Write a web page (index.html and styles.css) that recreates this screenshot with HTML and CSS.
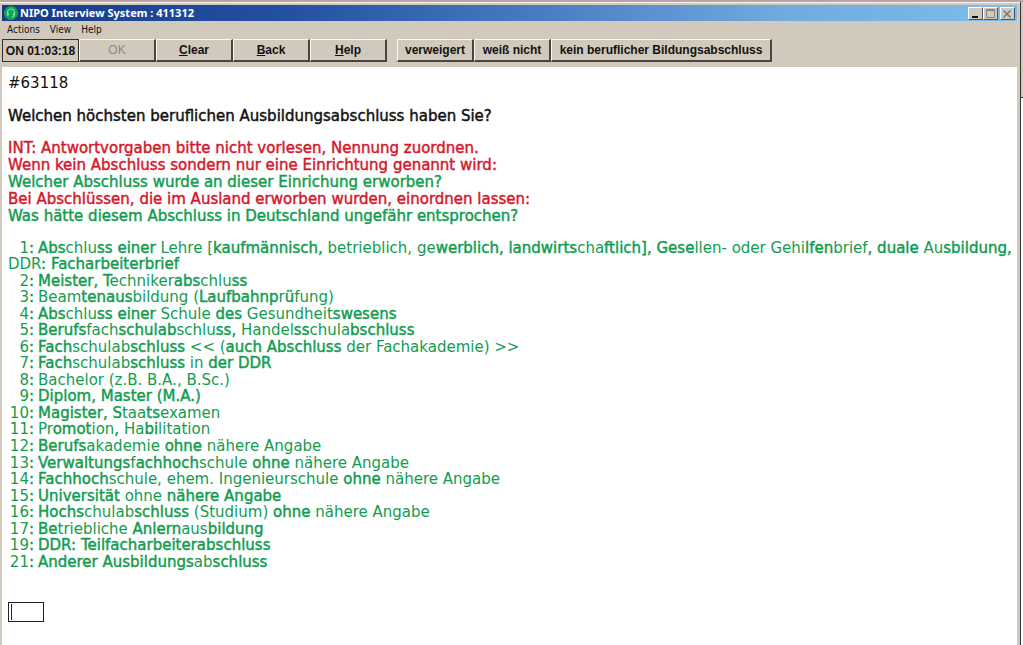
FILE: index.html
```html
<!DOCTYPE html>
<html lang="de">
<head>
<meta charset="utf-8">
<title>NIPO Interview System : 411312</title>
<link rel="stylesheet" href="styles.css">
</head>
<body>
<div class="desktop">
<div class="window">
  <header class="titlebar">
    <svg class="app-icon" viewBox="0 0 14 14" aria-hidden="true">
      <circle cx="7" cy="7" r="7" fill="#12a555"/>
      <path d="M3.5 8V6.5a3.5 3.5 0 0 1 7 0V8M10.3 9.5 8 11.3" fill="none" stroke="#7fe0a4" stroke-width="1.1"/>
      <rect x="3" y="6.8" width="1.8" height="3" rx=".8" fill="#7fe0a4"/>
      <rect x="9.2" y="6.8" width="1.8" height="3" rx=".8" fill="#7fe0a4"/>
    </svg>
    <h1 class="title">NIPO Interview System : 411312</h1>
    <div class="controls">
      <button class="control" aria-label="Minimize"><svg viewBox="0 0 12 10"><path d="M3 8h6" stroke="#111" stroke-width="2"/></svg></button>
      <button class="control" aria-label="Maximize"><svg viewBox="0 0 12 10"><path d="M2.500 .5h8v8h-8zM2.500 1.500h8" fill="none" stroke="#8a857b"/></svg></button>
      <button class="control control-close" aria-label="Close"><svg viewBox="0 0 12 10"><path d="M2.500 1.500l7 7M9.500 1.500l-7 7" stroke="#77726b" stroke-width="1.4"/></svg></button>
    </div>
  </header>
  <nav class="menu">
    <button class="menu-item">Actions</button>
    <button class="menu-item">View</button>
    <button class="menu-item">Help</button>
  </nav>
  <div class="toolbar">
    <output class="status">ON 01:03:18</output>
    <button class="tool" disabled>OK</button>
    <button class="tool"><u>C</u>lear</button>
    <button class="tool"><u>B</u>ack</button>
    <button class="tool"><u>H</u>elp</button>
    <div class="special">
      <button class="tool">verweigert</button>
      <button class="tool">weiß nicht</button>
      <button class="tool tool-wide">kein beruflicher Bildungsabschluss</button>
    </div>
  </div>
  <main class="page">
    <p class="line">#63118</p>
    <p class="line question"><label for="answer">Welchen höchsten beruflichen Ausbildungsabschluss haben Sie?</label></p>
    <div class="notes">
      <p class="note strong">INT: Antwortvorgaben bitte nicht vorlesen, Nennung zuordnen.</p>
      <p class="note strong">Wenn kein Abschluss sondern nur eine Einrichtung genannt wird:</p>
      <p class="note read strong">Welcher Abschluss wurde an dieser Einrichung erworben?</p>
      <p class="note strong">Bei Abschlüssen, die im Ausland erworben wurden, einordnen lassen:</p>
      <p class="note read strong">Was hätte diesem Abschluss in Deutschland ungefähr entsprochen?</p>
    </div>
    <ul class="answers">
      <li><span class="code">1<b>:</b></span><b>Abs</b>chlu<b>ss einer</b> Lehre [<b>kaufmännisch,</b> betrieblich, ge<b>werblich, landwirts</b>cha<b>ftlich], Gese</b>llen- oder Gehi<b>lfen</b>brief<b>, duale</b> Au<b>sbildung,</b> DDR<b>: Facharbeiterbrief</b></li>
      <li><span class="code">2<b>:</b></span><b>Meister,</b> <b>T</b>echniker<b>abs</b>chlu<b>ss</b></li>
      <li><span class="code">3<b>:</b></span>Beam<b>tenaus</b>bildung (<b>Laufbahnp</b>r<b>ü</b>fung)</li>
      <li><span class="code">4<b>:</b></span><b>Abs</b>chlu<b>ss einer</b> Schule <b>des</b> Gesundheit<b>swesens</b></li>
      <li><span class="code">5<b>:</b></span><b>Berufs</b>fach<b>schulab</b>schlu<b>ss,</b> Handel<b>ss</b>chula<b>bschluss</b></li>
      <li><span class="code">6<b>:</b></span><b>Fach</b>schulab<b>schluss</b> &lt;&lt; (<b>auch Abschluss</b> der Fachakademie) &gt;&gt;</li>
      <li><span class="code">7<b>:</b></span><b>Fach</b>schulab<b>schluss</b> in <b>der DDR</b></li>
      <li><span class="code">8<b>:</b></span>Bachelor (z.B. B.A., B.Sc.)</li>
      <li><span class="code">9<b>:</b></span><b>Diplom, Master (M.A.)</b></li>
      <li><span class="code">10<b>:</b></span><b>Magister, S</b>taa<b>ts</b>examen</li>
      <li><span class="code">11<b>:</b></span>Pr<b>omot</b>ion<b>,</b> Ha<b>bi</b>litation</li>
      <li><span class="code">12<b>:</b></span><b>Berufs</b>akademie <b>ohne</b> nähere Angabe</li>
      <li><span class="code">13<b>:</b></span><b>Verwaltungs</b>f<b>achhoch</b>schule <b>ohne</b> nähere Angabe</li>
      <li><span class="code">14<b>:</b></span><b>Fachhoch</b>schule, ehem. Ingenieurschule <b>ohne</b> nähere Angabe</li>
      <li><span class="code">15<b>:</b></span><b>Universität</b> ohne <b>nähere Angabe</b></li>
      <li><span class="code">16<b>:</b></span><b>Hochs</b>chulab<b>schluss</b> (Studium) <b>ohne</b> nähere Angabe</li>
      <li><span class="code">17<b>:</b></span><b>Be</b>triebliche <b>Anlern</b>aus<b>bildung</b></li>
      <li><span class="code">19<b>:</b></span><b>DDR:</b> <b>Teilfacharbeiterabschluss</b></li>
      <li><span class="code">21<b>:</b></span><b>Anderer Ausbildungs</b>ab<b>schluss</b></li>
    </ul>
    <input class="answer" id="answer" type="text">
  </main>
</div>
<aside class="behind"></aside>
</div>
</body>
</html>
```

FILE: styles.css
```css
* { box-sizing: border-box; }

body {
  margin: 0;
  background: #d1c9bc;
  color: #111;
  font: 15px/16px "DejaVu Sans", sans-serif;
}

h1, p, ul { margin: 0; padding: 0; }
button { font: inherit; color: inherit; }

.desktop {
  display: flex;
  min-height: 100vh;
  border-top: 2px solid #b9a5a8;
}

.window {
  flex: 1;
  display: flex;
  flex-direction: column;
  padding: 2px 3px 0 2px;
  border-top: 1px solid #f8f5ee;
  background: #d1c9bc;
}

.behind {
  width: 3px;
  border-left: 1px solid #333;
  background: linear-gradient(#d1c9bc 95px, #333 95px, #333 96px, #fff 96px);
}

.titlebar {
  display: flex;
  align-items: center;
  height: 16px;
  padding: 0 2px;
  background: linear-gradient(90deg, #153b88, #2450a0 28%, #4576bd 50%, #70abdf 77%, #7dbdec);
}

.app-icon { width: 14px; height: 14px; }

.title {
  flex: 1;
  padding-left: 2px;
  color: #fff;
  font: bold 11px/16px "Noto Sans", sans-serif;
}

.controls { display: flex; }

.control {
  display: flex;
  width: 15px;
  height: 13px;
  padding: 1px 0;
  border: 1px solid;
  border-color: #fff #47566b #47566b #fff;
  background: #d1c9bc;
}

.control svg { width: 12px; height: 10px; }
.control-close { margin-left: 2px; }

.menu {
  display: flex;
  gap: 10px;
  height: 18px;
  padding: 0 5px;
}

.menu-item {
  padding: 0;
  border: 0;
  background: none;
  font: 10px/18px "DejaVu Sans Condensed", "DejaVu Sans", sans-serif;
}

.toolbar {
  display: flex;
  height: 28px;
  padding-bottom: 5px;
  font: bold 12px/16px "Liberation Sans", sans-serif;
}

.status {
  width: 77px;
  padding: 2px 0;
  border: 1px solid #35312d;
  text-align: center;
  white-space: nowrap;
  line-height: 18px;
}

.tool {
  width: 77px;
  padding: 0;
  border: 1px solid;
  border-color: #fbf8f0 #4a4540 #4a4540 #fbf8f0;
  border-right-width: 2px;
  border-bottom-width: 2px;
  background: #d1c9bc;
  white-space: nowrap;
}

.tool:disabled { color: #908a80; font-weight: normal; }

.special { display: flex; padding-left: 10px; }
.tool-wide { width: 221px; }

.page {
  flex: 1;
  display: flex;
  flex-direction: column;
  padding: 8px 2px 23px 6px;
  background: #fff;
}

.question { padding-top: 17px; }

.notes {
  display: grid;
  gap: 1px;
  padding: 16px 0;
  color: #d5182c;
}

.read { color: #129c50; }

.strong, .question, .answers b {
  font-weight: normal;
  -webkit-text-stroke: 0.03em;
}

.answers {
  flex: 1;
  display: flex;
  flex-direction: column;
  justify-content: space-between;
  list-style: none;
  color: #129c50;
}

.code {
  display: inline-block;
  width: 30px;
  padding-right: 4px;
  text-align: right;
}

.answer {
  width: 36px;
  height: 20px;
  margin-top: 32px;
  padding: 0 4px;
  border: 1px solid #222;
  outline: 0;
  background: linear-gradient(#222, #222) 2px center / 1px 16px no-repeat;
  font: inherit;
}
```
